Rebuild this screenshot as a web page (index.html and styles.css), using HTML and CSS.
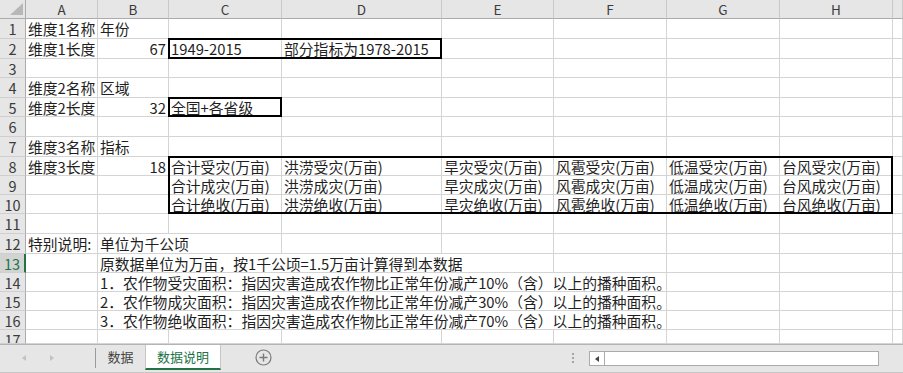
FILE: index.html
```html
<!DOCTYPE html>
<html lang="zh-CN">
<head>
  <meta charset="UTF-8">
  <title>数据说明</title>
  <link rel="stylesheet" href="styles.css">
</head>
<body>
  <div class="sheet-wrap">
    <div class="sheet">
      <div class="corner"><span class="tri"></span></div>
      <div class="ch">A</div><div class="ch">B</div><div class="ch">C</div><div class="ch">D</div>
      <div class="ch">E</div><div class="ch">F</div><div class="ch">G</div><div class="ch">H</div><div class="ch"></div>

      <div class="rh">1</div><div class="c">维度1名称</div><div class="c">年份</div>
      <div class="c"></div><div class="c"></div><div class="c"></div><div class="c"></div><div class="c"></div><div class="c"></div><div class="c"></div>

      <div class="rh">2</div><div class="c">维度1长度</div><div class="c num">67</div>
      <div class="c">1949-2015</div><div class="c">部分指标为1978-2015</div>
      <div class="c"></div><div class="c"></div><div class="c"></div><div class="c"></div><div class="c"></div>

      <div class="rh">3</div>
      <div class="c"></div><div class="c"></div><div class="c"></div><div class="c"></div><div class="c"></div><div class="c"></div><div class="c"></div><div class="c"></div><div class="c"></div>

      <div class="rh">4</div><div class="c">维度2名称</div><div class="c">区域</div>
      <div class="c"></div><div class="c"></div><div class="c"></div><div class="c"></div><div class="c"></div><div class="c"></div><div class="c"></div>

      <div class="rh">5</div><div class="c">维度2长度</div><div class="c num">32</div>
      <div class="c">全国+各省级</div>
      <div class="c"></div><div class="c"></div><div class="c"></div><div class="c"></div><div class="c"></div><div class="c"></div>

      <div class="rh">6</div>
      <div class="c"></div><div class="c"></div><div class="c"></div><div class="c"></div><div class="c"></div><div class="c"></div><div class="c"></div><div class="c"></div><div class="c"></div>

      <div class="rh">7</div><div class="c">维度3名称</div><div class="c">指标</div>
      <div class="c"></div><div class="c"></div><div class="c"></div><div class="c"></div><div class="c"></div><div class="c"></div><div class="c"></div>

      <div class="rh">8</div><div class="c">维度3长度</div><div class="c num">18</div>
      <div class="c">合计受灾(万亩)</div><div class="c">洪涝受灾(万亩)</div><div class="c">旱灾受灾(万亩)</div>
      <div class="c">风雹受灾(万亩)</div><div class="c">低温受灾(万亩)</div><div class="c">台风受灾(万亩)</div><div class="c"></div>

      <div class="rh">9</div><div class="c"></div><div class="c"></div>
      <div class="c">合计成灾(万亩)</div><div class="c">洪涝成灾(万亩)</div><div class="c">旱灾成灾(万亩)</div>
      <div class="c">风雹成灾(万亩)</div><div class="c">低温成灾(万亩)</div><div class="c">台风成灾(万亩)</div><div class="c"></div>

      <div class="rh">10</div><div class="c"></div><div class="c"></div>
      <div class="c">合计绝收(万亩)</div><div class="c">洪涝绝收(万亩)</div><div class="c">旱灾绝收(万亩)</div>
      <div class="c">风雹绝收(万亩)</div><div class="c">低温绝收(万亩)</div><div class="c">台风绝收(万亩)</div><div class="c"></div>

      <div class="rh">11</div>
      <div class="c"></div><div class="c"></div><div class="c"></div><div class="c"></div><div class="c"></div><div class="c"></div><div class="c"></div><div class="c"></div><div class="c"></div>

      <div class="rh">12</div><div class="c">特别说明:</div><div class="c span2">单位为千公顷</div>
      <div class="c"></div><div class="c"></div><div class="c"></div><div class="c"></div><div class="c"></div><div class="c"></div>

      <div class="rh sel">13</div><div class="c"></div>
      <div class="c span4">原数据单位为万亩，按1千公顷=1.5万亩计算得到本数据</div>
      <div class="c"></div><div class="c"></div><div class="c"></div><div class="c"></div>

      <div class="rh">14</div><div class="c"></div>
      <div class="c span5">1．农作物受灾面积：指因灾害造成农作物比正常年份减产10%（含）以上的播种面积。</div>
      <div class="c"></div><div class="c"></div><div class="c"></div>

      <div class="rh">15</div><div class="c"></div>
      <div class="c span5">2．农作物成灾面积：指因灾害造成农作物比正常年份减产30%（含）以上的播种面积。</div>
      <div class="c"></div><div class="c"></div><div class="c"></div>

      <div class="rh">16</div><div class="c"></div>
      <div class="c span5">3．农作物绝收面积：指因灾害造成农作物比正常年份减产70%（含）以上的播种面积。</div>
      <div class="c"></div><div class="c"></div><div class="c"></div>

      <div class="rh">17</div>
      <div class="c"></div><div class="c"></div><div class="c"></div><div class="c"></div><div class="c"></div><div class="c"></div><div class="c"></div><div class="c"></div><div class="c"></div>
    </div>

    <!-- thick outline borders drawn on top of the cells -->
    <div class="ranges">
      <div class="range r-c2d2"></div>
      <div class="range r-c5"></div>
      <div class="range r-c8h10"></div>
    </div>
  </div>

  <div class="tabbar">
    <div class="nav">
      <span class="arrow left"></span>
      <span class="arrow right"></span>
    </div>
    <div class="tab">数据</div>
    <div class="tab active">数据说明</div>
    <div class="add">
      <svg width="17" height="17" viewBox="0 0 17 17">
        <circle cx="8.5" cy="8.5" r="7.5" fill="none" stroke="#7a7a7a" stroke-width="1.2"/>
        <path d="M8.5 4.5v8M4.5 8.5h8" stroke="#7a7a7a" stroke-width="1.4"/>
      </svg>
    </div>
    <div class="dots"><i></i><i></i><i></i></div>
    <div class="hscroll">
      <div class="hbtn"><span class="arrow dark"></span></div>
    </div>
  </div>
</body>
</html>
```

FILE: styles.css
```css
:root {
  --cols: 26px 72px 71px 113px 160px 112px 113px 113px 113px 10px;
  --rows: 19px 20px 20px 19px 20px 19px 20px 20px 19px 19px 19px 20px 20px 19px 19px 19px 19px 14px;
}
body {
  margin: 0;
  width: 903px;
  height: 373px;
  overflow: hidden;
  background: #fff;
  font-family: "Noto Sans CJK SC", "Liberation Sans", sans-serif;
  color: #222;
}
.sheet-wrap {
  display: grid;
}
.sheet, .ranges {
  grid-area: 1 / 1;
  display: grid;
  grid-template-columns: var(--cols);
  grid-template-rows: var(--rows);
}
.ranges {
  z-index: 1;
  pointer-events: none;
}
.c, .ch, .rh, .corner {
  box-sizing: border-box;
  white-space: nowrap;
}
.ch, .rh, .corner {
  overflow: hidden;
}
.c {
  border-right: 1px solid #d4d4d4;
  border-bottom: 1px solid #d4d4d4;
  font-size: 14.8px;
  line-height: 20px;
  padding: 0 2px;
  color: #1f1f1f;
}
.c.num {
  text-align: right;
}
.span2 { grid-column: span 2; }
.span4 { grid-column: span 4; }
.span5 { grid-column: span 5; }
.corner {
  background: #e6e6e6;
  border-right: 1px solid #ababab;
  border-bottom: 1px solid #ababab;
  display: flex;
  align-items: flex-end;
  justify-content: flex-end;
  padding: 0 2px 3px 0;
}
.tri {
  width: 0;
  height: 0;
  border-left: 13px solid transparent;
  border-bottom: 12px solid #b7b7b7;
}
.ch {
  background: #e6e6e6;
  border-right: 1px solid #c9c9c9;
  border-bottom: 1px solid #ababab;
  text-align: center;
  font-size: 13.5px;
  line-height: 18px;
  color: #3b3b3b;
}
.rh {
  background: #e6e6e6;
  border-right: 1px solid #ababab;
  border-bottom: 1px solid #cfcfcf;
  text-align: center;
  font-size: 14.5px;
  line-height: 19px;
  color: #3b3b3b;
}
.rh.sel {
  background: #d3d3d3;
  border-right: 2px solid #217346;
  color: #217346;
}
.range {
  border: 2px solid #000;
  margin: -1px 0 0 -1px;
}
.r-c2d2 { grid-area: 3 / 4 / 4 / 6; }
.r-c5 { grid-area: 6 / 4 / 7 / 5; }
.r-c8h10 { grid-area: 9 / 4 / 12 / 10; }

.tabbar {
  display: flex;
  height: 29px;
  box-sizing: border-box;
  background: #e6e6e6;
  border-top: 1px solid #b4b4b4;
  border-bottom: 1px solid #c6c6c6;
  font-size: 13px;
}
.nav {
  width: 96px;
  display: flex;
  align-items: center;
  gap: 24px;
  padding-left: 22px;
  box-sizing: border-box;
  border-right: 1px solid #9a9a9a;
  margin: 3px 0 4px;
}
.arrow {
  width: 0;
  height: 0;
  border-top: 3.5px solid transparent;
  border-bottom: 3.5px solid transparent;
}
.arrow.left { border-right: 4px solid #c2c2c2; }
.arrow.right { border-left: 4px solid #c2c2c2; }
.arrow.dark { border-right: 4px solid #444; }
.tab {
  width: 49px;
  text-align: center;
  line-height: 24px;
  color: #444;
}
.tab.active {
  width: 76px;
  box-sizing: border-box;
  background: #fff;
  color: #217346;
  border-left: 1px solid #c6c6c6;
  border-right: 1px solid #c6c6c6;
  border-bottom: 2px solid #217346;
  height: 25px;
  line-height: 23px;
}
.add {
  margin-left: 34px;
  padding-top: 4px;
}
.dots {
  margin-left: 300px;
  width: 2px;
  display: flex;
  flex-direction: column;
  gap: 2px;
  padding-top: 8px;
}
.dots i {
  width: 2px;
  height: 2px;
  background: #a5a5a5;
}
.hscroll {
  margin: 6px 0 0 15px;
  width: 290px;
  height: 15px;
  box-sizing: border-box;
  border: 1px solid #ababab;
  background: #fff;
}
.hbtn {
  width: 15px;
  height: 13px;
  box-sizing: border-box;
  border-right: 1px solid #ababab;
  display: flex;
  align-items: center;
  justify-content: center;
}
```
